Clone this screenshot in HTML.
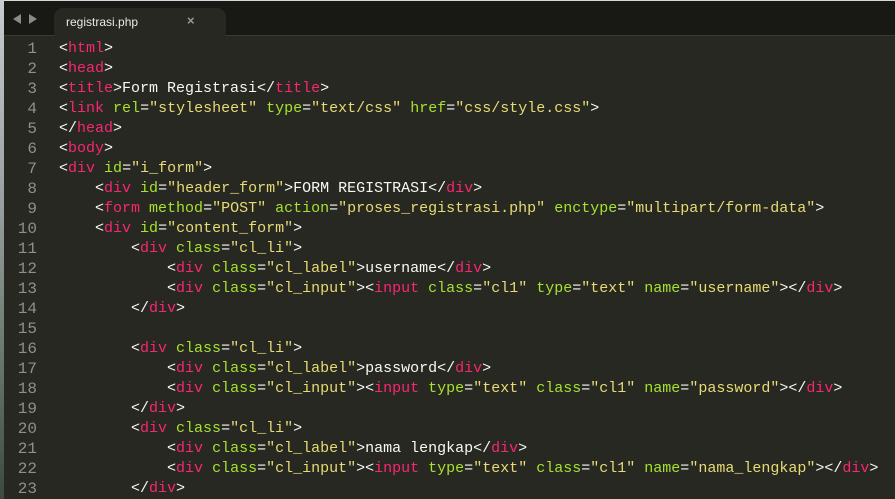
<!DOCTYPE html>
<html><head><meta charset="utf-8"><style>
body{margin:0;width:895px;height:499px;overflow:hidden;background:#272822;position:relative;font-family:"Liberation Mono",monospace;}
#strip{position:absolute;left:0;top:0;width:4px;height:499px;background:linear-gradient(#c8ccd0,#9aa0a0 40%,#6a7a70 70%,#3a4a40);}
#top{position:absolute;left:4px;top:0;right:0;height:1px;background:#d8d8d8;}
#bar{position:absolute;left:4px;top:1px;right:0;height:34px;background:#181814;border-bottom:1px solid #3a3a34;}
#tab{position:absolute;left:50px;top:7px;width:172px;height:29px;background:#272822;border-radius:9px 9px 0 0;}
#tab span{position:absolute;left:12px;top:7px;color:#e8e8e8;font:12px "Liberation Sans",sans-serif;}
#tab b{position:absolute;left:133px;top:5px;color:#9a9a9a;font:bold 13px "Liberation Sans",sans-serif;}
.arr{position:absolute;top:13px;width:0;height:0;border-top:5px solid transparent;border-bottom:5px solid transparent;}
.l{position:absolute;left:59px;font-size:15px;line-height:20px;white-space:pre;color:#f8f8f2;margin-top:2px;}
.n{position:absolute;left:4px;width:33px;text-align:right;font-size:16px;line-height:20px;color:#8f908a;margin-top:2px;}
.t{color:#f92672}.a{color:#a6e22e}.s{color:#e6db74}
</style></head><body>
<div id="strip"></div><div id="top"></div>
<div id="bar">
<div class="arr" style="left:9px;border-right:8px solid #8a8a8a"></div>
<div class="arr" style="left:25px;border-left:8px solid #8a8a8a"></div>
<div id="tab"><span>registrasi.php</span><b>×</b></div>
</div>
<div class="n" style="top:37px">1</div><div class="l" style="top:37px">&lt;<span class="t">html</span>&gt;</div>
<div class="n" style="top:57px">2</div><div class="l" style="top:57px">&lt;<span class="t">head</span>&gt;</div>
<div class="n" style="top:77px">3</div><div class="l" style="top:77px">&lt;<span class="t">title</span>&gt;Form Registrasi&lt;/<span class="t">title</span>&gt;</div>
<div class="n" style="top:97px">4</div><div class="l" style="top:97px">&lt;<span class="t">link</span> <span class="a">rel</span>=<span class="s">"stylesheet"</span> <span class="a">type</span>=<span class="s">"text/css"</span> <span class="a">href</span>=<span class="s">"css/style.css"</span>&gt;</div>
<div class="n" style="top:117px">5</div><div class="l" style="top:117px">&lt;/<span class="t">head</span>&gt;</div>
<div class="n" style="top:137px">6</div><div class="l" style="top:137px">&lt;<span class="t">body</span>&gt;</div>
<div class="n" style="top:157px">7</div><div class="l" style="top:157px">&lt;<span class="t">div</span> <span class="a">id</span>=<span class="s">"i_form"</span>&gt;</div>
<div class="n" style="top:177px">8</div><div class="l" style="top:177px">    &lt;<span class="t">div</span> <span class="a">id</span>=<span class="s">"header_form"</span>&gt;FORM REGISTRASI&lt;/<span class="t">div</span>&gt;</div>
<div class="n" style="top:197px">9</div><div class="l" style="top:197px">    &lt;<span class="t">form</span> <span class="a">method</span>=<span class="s">"POST"</span> <span class="a">action</span>=<span class="s">"proses_registrasi.php"</span> <span class="a">enctype</span>=<span class="s">"multipart/form-data"</span>&gt;</div>
<div class="n" style="top:217px">10</div><div class="l" style="top:217px">    &lt;<span class="t">div</span> <span class="a">id</span>=<span class="s">"content_form"</span>&gt;</div>
<div class="n" style="top:237px">11</div><div class="l" style="top:237px">        &lt;<span class="t">div</span> <span class="a">class</span>=<span class="s">"cl_li"</span>&gt;</div>
<div class="n" style="top:257px">12</div><div class="l" style="top:257px">            &lt;<span class="t">div</span> <span class="a">class</span>=<span class="s">"cl_label"</span>&gt;username&lt;/<span class="t">div</span>&gt;</div>
<div class="n" style="top:277px">13</div><div class="l" style="top:277px">            &lt;<span class="t">div</span> <span class="a">class</span>=<span class="s">"cl_input"</span>&gt;&lt;<span class="t">input</span> <span class="a">class</span>=<span class="s">"cl1"</span> <span class="a">type</span>=<span class="s">"text"</span> <span class="a">name</span>=<span class="s">"username"</span>&gt;&lt;/<span class="t">div</span>&gt;</div>
<div class="n" style="top:297px">14</div><div class="l" style="top:297px">        &lt;/<span class="t">div</span>&gt;</div>
<div class="n" style="top:317px">15</div>
<div class="n" style="top:337px">16</div><div class="l" style="top:337px">        &lt;<span class="t">div</span> <span class="a">class</span>=<span class="s">"cl_li"</span>&gt;</div>
<div class="n" style="top:357px">17</div><div class="l" style="top:357px">            &lt;<span class="t">div</span> <span class="a">class</span>=<span class="s">"cl_label"</span>&gt;password&lt;/<span class="t">div</span>&gt;</div>
<div class="n" style="top:377px">18</div><div class="l" style="top:377px">            &lt;<span class="t">div</span> <span class="a">class</span>=<span class="s">"cl_input"</span>&gt;&lt;<span class="t">input</span> <span class="a">type</span>=<span class="s">"text"</span> <span class="a">class</span>=<span class="s">"cl1"</span> <span class="a">name</span>=<span class="s">"password"</span>&gt;&lt;/<span class="t">div</span>&gt;</div>
<div class="n" style="top:397px">19</div><div class="l" style="top:397px">        &lt;/<span class="t">div</span>&gt;</div>
<div class="n" style="top:417px">20</div><div class="l" style="top:417px">        &lt;<span class="t">div</span> <span class="a">class</span>=<span class="s">"cl_li"</span>&gt;</div>
<div class="n" style="top:437px">21</div><div class="l" style="top:437px">            &lt;<span class="t">div</span> <span class="a">class</span>=<span class="s">"cl_label"</span>&gt;nama lengkap&lt;/<span class="t">div</span>&gt;</div>
<div class="n" style="top:457px">22</div><div class="l" style="top:457px">            &lt;<span class="t">div</span> <span class="a">class</span>=<span class="s">"cl_input"</span>&gt;&lt;<span class="t">input</span> <span class="a">type</span>=<span class="s">"text"</span> <span class="a">class</span>=<span class="s">"cl1"</span> <span class="a">name</span>=<span class="s">"nama_lengkap"</span>&gt;&lt;/<span class="t">div</span>&gt;</div>
<div class="n" style="top:477px">23</div><div class="l" style="top:477px">        &lt;/<span class="t">div</span>&gt;</div>
</body></html>
